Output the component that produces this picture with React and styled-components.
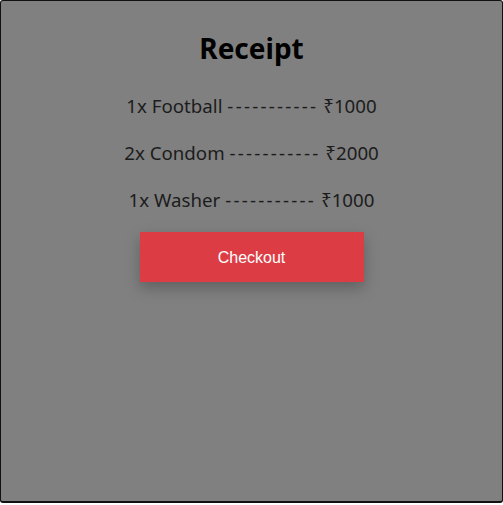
import React from "react";
import styled, { createGlobalStyle } from "styled-components";

const Global = createGlobalStyle`
  html, body { margin: 0; padding: 0; background: #ffffff; }
  body { font-family: "Noto Sans", "Open Sans", sans-serif; }
  * { box-sizing: border-box; }
`;

const Card = styled.div`
  width: 503px;
  height: 503px;
  background: #808080;
  border: 1px solid #111;
  border-bottom-width: 2px;
  border-radius: 3px;
  display: flex;
  flex-direction: column;
  align-items: center;
  padding-top: 30px;
`;

const Title = styled.h1`
  margin: 0 0 27px;
  font-size: 28px;
  line-height: 34px;
  font-weight: 700;
  color: #000;
`;

const Items = styled.div`
  display: flex;
  flex-direction: column;
  align-items: center;
  gap: 20px;
`;

const Item = styled.p`
  margin: 0;
  font-size: 18.7px;
  line-height: 27px;
  color: #1c1c1c;
  white-space: pre;
`;

const Dashes = styled.span`
  letter-spacing: 2.25px;
`;

const Button = styled.button`
  margin-top: 19px;
  width: 224px;
  height: 50px;
  border: none;
  border-radius: 0;
  background: #dc3d45;
  color: #fff;
  font-family: "Liberation Sans", Arial, sans-serif;
  font-size: 16px;
  padding-top: 2px;
  box-shadow: 0 6px 14px rgba(0, 0, 0, 0.25);
  cursor: pointer;
`;

const items = [
  { qty: 1, name: "Football", price: 1000 },
  { qty: 2, name: "Condom", price: 2000 },
  { qty: 1, name: "Washer", price: 1000 },
];

export default function App() {
  return (
    <>
      <Global />
      <Card>
        <Title>Receipt</Title>
        <Items>
          {items.map((it) => (
            <Item key={it.name}>
              {it.qty}x {it.name} <Dashes>-----------</Dashes> ₹{it.price}
            </Item>
          ))}
        </Items>
        <Button>Checkout</Button>
      </Card>
    </>
  );
}
